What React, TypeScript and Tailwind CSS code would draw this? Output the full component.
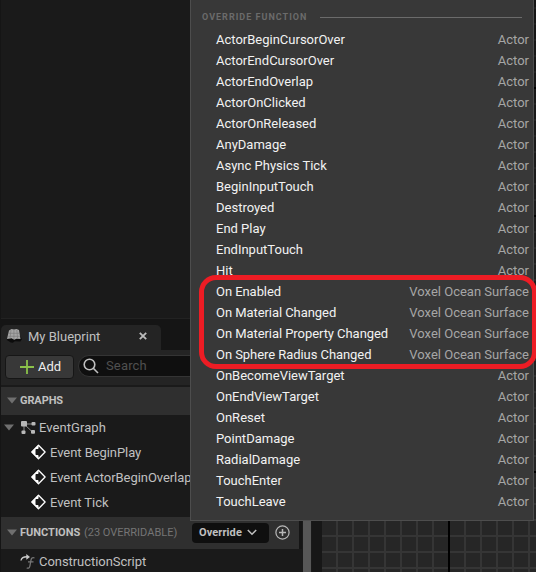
import React from "react";

const events: [string, string][] = [
  ["ActorBeginCursorOver", "Actor"],
  ["ActorEndCursorOver", "Actor"],
  ["ActorEndOverlap", "Actor"],
  ["ActorOnClicked", "Actor"],
  ["ActorOnReleased", "Actor"],
  ["AnyDamage", "Actor"],
  ["Async Physics Tick", "Actor"],
  ["BeginInputTouch", "Actor"],
  ["Destroyed", "Actor"],
  ["End Play", "Actor"],
  ["EndInputTouch", "Actor"],
  ["Hit", "Actor"],
  ["On Enabled", "Voxel Ocean Surface"],
  ["On Material Changed", "Voxel Ocean Surface"],
  ["On Material Property Changed", "Voxel Ocean Surface"],
  ["On Sphere Radius Changed", "Voxel Ocean Surface"],
  ["OnBecomeViewTarget", "Actor"],
  ["OnEndViewTarget", "Actor"],
  ["OnReset", "Actor"],
  ["PointDamage", "Actor"],
  ["RadialDamage", "Actor"],
  ["TouchEnter", "Actor"],
  ["TouchLeave", "Actor"],
];

function Triangle() {
  return (
    <svg width="10" height="7" viewBox="0 0 10 7" className="shrink-0">
      <path d="M0 .5h10L5 6.5z" fill="#6f6f6f" />
    </svg>
  );
}

function EventIcon() {
  return (
    <svg width="16" height="16" viewBox="0 0 16 16" className="shrink-0">
      <path d="M7.500 1.200 14.100 8 7.500 14.800.9 8z" fill="#1a1a1a" stroke="#fff" strokeWidth="1.300" strokeLinejoin="round" />
      <path d="M7.500.8.2 8l7.300 7.200V11h-3V5h3z" fill="#fff" />
      <path d="M5 6h2.500V4l4 4-4 4v-2H5z" fill="#1a1a1a" />
    </svg>
  );
}

function GraphIcon() {
  return (
    <svg width="16" height="16" viewBox="0 0 16 16" className="shrink-0" fill="#b8b8b8">
      <path d="M4 4h9M4 4v9M4 4l9 8.500" stroke="#8a8a8a" strokeWidth="1" />
      <rect x="1" y="1" width="6" height="5.500" rx="1" />
      <rect x="11.500" y="2" width="4" height="3.600" rx="1" />
      <rect x="1.500" y="10.500" width="4" height="3.600" rx="1" />
      <rect x="11" y="10" width="4" height="3.800" rx="1" />
    </svg>
  );
}

function BookIcon() {
  return (
    <svg width="16" height="16" viewBox="0 0 16 16" className="shrink-0">
      <path d="M1.500 10 .8 12l4 2.500 2 .3 2-1.600 5.500.3 1.500-2-1-3z" fill="#0c0c0c" />
      <path d="M3 2.500 5.500 1l2.500.5 2.500-.5 2.500 1 1.500 9-4-.3-2.300 1-2.700-1.500-4.500.8z" fill="#a5a5a5" />
      <path d="M5 2 4 10.500M7.900 2V11M10.800 2l.8 8.500M2.800 5.300h10.600M2.300 8.300h11.700" stroke="#7c7c7c" strokeWidth=".7" fill="none" />
    </svg>
  );
}

function FunctionIcon() {
  return (
    <svg width="16" height="16" viewBox="0 0 16 16" className="shrink-0" fill="none">
      <path d="M1 6.500C1.500 3.500 4 2.800 7 2.800" stroke="#c8c8c8" strokeWidth="1.400" />
      <path d="M6.300 0 10 2.900 6.300 5.800z" fill="#c8c8c8" />
      <path d="M14.500 4c-2.200-.9-3.200.3-3.600 2.500l-1 5.500c-.4 2-1.400 2.600-3.200 2M8 7.800h5.500" stroke="#777" strokeWidth="1.300" />
    </svg>
  );
}

function EventRow({ label }: { label: string }) {
  return (
    <div className="flex h-[25px] items-center gap-[3px] pl-[30px] pb-px text-[13px] tracking-[-0.06px]">
      <EventIcon />
      {label}
    </div>
  );
}

function Menu() {
  return (
    <div className="absolute left-[190px] top-0 h-[521px] w-[344px] border-x border-b border-[#4d4d4d] bg-[#383838]">
      <div className="flex h-[29px] items-center gap-[13px] pl-[11px] pr-[11px] pt-[6px]">
        <span className="w-[105px] shrink-0 text-[9px] font-bold tracking-[1.02px] text-[#6b6b6b]">OVERRIDE FUNCTION</span>
        <span className="h-px flex-1 bg-[#6b6b6b]" />
      </div>
      {events.map(([name, owner]) => (
        <div key={name} className="flex h-[21px] items-center justify-between pl-[25px] pr-[4px] text-[13px]">
          <span className={name.startsWith("On ") ? "tracking-[-0.06px] text-[#f2f2f2]" : "text-[#f2f2f2]"}>{name}</span>
          <span className="text-[#a6a6a6]">{owner}</span>
        </div>
      ))}
    </div>
  );
}

export default function App() {
  return (
    <div className="relative flex h-[572px] w-[536px] overflow-hidden whitespace-nowrap bg-[#151515] font-['Roboto',sans-serif] leading-none text-[#c0c0c0]">
      <div className="flex w-[302px] shrink-0 flex-col pl-px">
        <div className="h-[319px] border-b border-[#222] bg-[#1a1a1a]" />
        <div className="mt-[6px] flex h-[25px] w-[160px] items-center rounded-t-[5px] bg-[#242424] pl-[5px] pb-[3px]">
          <BookIcon />
          <span className="ml-[6px] mt-px w-[111px] text-[13px]">My Blueprint</span>
          <svg width="8" height="8" viewBox="0 0 7 7"><path d="M.7.7l5.600 5.600M6.300.7.7 6.300" stroke="#bbb" strokeWidth="1.600" /></svg>
        </div>
        <div className="flex h-[35px] shrink-0 items-start gap-[4px] bg-[#242424] pl-[4px] pt-[5px]">
          <div className="flex h-[24px] w-[69px] items-center rounded-[4px] border border-[#161616] bg-[#383838] pl-[14px] pb-px text-[13px] text-[#eee]">
            <svg width="14" height="14" viewBox="0 0 14 14"><path d="M7 0v14M0 7h14" stroke="#8bc24a" strokeWidth="1.800" /></svg>
            <span className="ml-[4px]">Add</span>
          </div>
          <div className="flex h-[22px] w-[214px] items-center rounded-full border border-[#343434] bg-[#0f0f0f] pl-[4px] pb-px text-[13px] text-[#505050]">
            <svg width="16" height="16" viewBox="0 0 16 16" fill="none" stroke="#c0c0c0" strokeWidth="1.600"><circle cx="6.500" cy="6.500" r="5.300" /><path d="m10.300 10.300 4.700 4.700" /></svg>
            <span className="ml-[7px] tracking-[0.15px]">Search</span>
          </div>
        </div>
        <div className="h-[2px] bg-[#1a1a1a]" />
        <div className="flex h-[28px] w-[298px] shrink-0 items-center gap-[3px] bg-[#2f2f2f] pl-[6px] pb-px text-[11px] font-bold tracking-[-0.1px]">
          <Triangle />
          GRAPHS
        </div>
        <div className="h-[102px] shrink-0 bg-[#1a1a1a]">
          <div className="flex h-[25px] items-center pl-[3px] text-[13px]">
            <Triangle />
            <span className="ml-[6px] flex items-center gap-[3px] tracking-[0.06px]"><GraphIcon />EventGraph</span>
          </div>
          <EventRow label="Event BeginPlay" />
          <EventRow label="Event ActorBeginOverlap" />
          <EventRow label="Event Tick" />
        </div>
        <div className="flex h-[32px] w-[298px] shrink-0 items-center bg-[#2f2f2f] pl-[6px] pb-px">
          <Triangle />
          <span className="ml-[3px] w-[64px] shrink-0 text-[11px] font-bold">FUNCTIONS</span>
          <span className="w-[108px] shrink-0 text-[11px] text-[#757575]">(23 OVERRIDABLE)</span>
          <div className="flex h-[20px] w-[77px] shrink-0 items-center justify-between rounded-[4px] bg-[#0f0f0f] pl-[7px] pr-[12px] text-[11px] font-bold tracking-[0.1px]">
            Override
            <svg width="10" height="7" viewBox="0 0 10 7" fill="none"><path d="m.8 1 4.200 4.300L9.200 1" stroke="#c0c0c0" strokeWidth="1.500" /></svg>
          </div>
          <svg width="15" height="15" viewBox="0 0 15 15" fill="none" stroke="#b8b8b8" className="ml-[6px] shrink-0"><circle cx="7.500" cy="7.500" r="6.600" strokeWidth="1.200" /><path d="M7.500 4v7M4 7.500h7" strokeWidth="1.500" /></svg>
        </div>
        <div className="flex flex-1 items-center gap-[3px] bg-[#1a1a1a] pl-[19px] pt-[2px] text-[13px] tracking-[-0.05px]">
          <FunctionIcon />
          ConstructionScript
        </div>
      </div>
      <div className="w-[10px] shrink-0 bg-[#1a1a1a] pl-px"><div className="h-full w-[8px] bg-[#575757]" /></div>
      <div className="w-[10px] shrink-0 bg-[#171717]" />
      <svg width="214" height="572" className="shrink-0 bg-[#262626]">
        <defs>
          <pattern id="grid" width="16" height="16" x="14" y="7" patternUnits="userSpaceOnUse">
            <path d="M0 1h16M1 0v16" stroke="#353535" strokeWidth="2" />
          </pattern>
          <linearGradient id="shade" x1="0" y1="0" x2="0" y2="1">
            <stop offset="0" stopColor="#000" stopOpacity=".45" />
            <stop offset=".85" stopColor="#000" stopOpacity="0" />
          </linearGradient>
        </defs>
        <rect width="214" height="572" fill="url(#grid)" />
        <path d="M127 0v572M0 88h214M0 216h214M0 344h214M0 472h214" stroke="#000" strokeWidth="2" />
        <rect width="214" height="572" fill="url(#shade)" />
      </svg>
      <Menu />
      <div className="absolute left-[199px] top-[275px] h-[94px] w-[338px] rounded-[17px] border-[5px] border-[#ed1c24]" />
    </div>
  );
}
